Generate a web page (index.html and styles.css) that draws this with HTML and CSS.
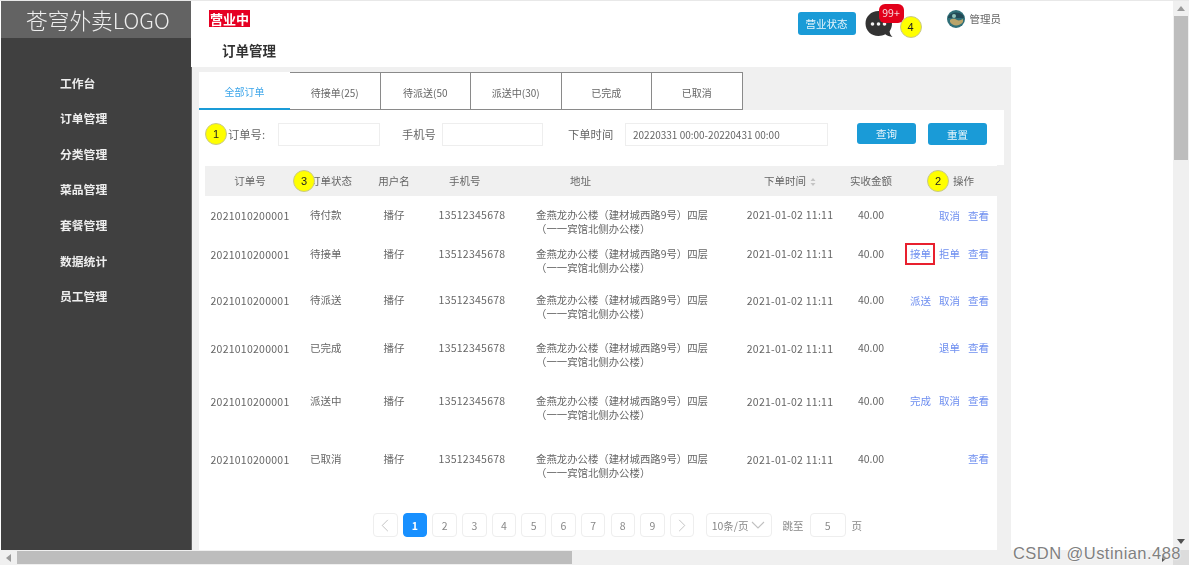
FILE: index.html
```html
<!DOCTYPE html>
<html lang="zh-CN">
<head>
<meta charset="utf-8">
<title>订单管理</title>
<link rel="stylesheet" href="styles.css">
</head>
<body>
<div class="window">
  <div class="page">
    <aside class="sidebar">
      <div class="logo">苍穹外卖LOGO</div>
      <nav class="menu">
        <a>工作台</a><a>订单管理</a><a>分类管理</a><a>菜品管理</a><a>套餐管理</a><a>数据统计</a><a>员工管理</a>
      </nav>
    </aside>
    <main class="main">
      <header class="header">
        <div class="topline">
          <span class="status-tag">营业中</span>
          <div class="top-right">
            <button class="btn btn-status">营业状态</button>
            <div class="notify">
              <svg class="bubble" viewBox="0 0 28 28" width="28" height="28"><path d="M13.5 1C6 1 .5 6.500 .5 13.500S6 26 13.500 26c2.500 0 4.800-.6 6.800-1.700 1.800 1.500 4.200 2.400 7.200 2.700-1.700-1.500-2.700-3.500-2.900-5.800 1.500-2.100 2.400-4.700 2.400-7.700C27 6.500 21 1 13.500 1z" fill="#333"/><circle cx="7.500" cy="14" r="1.800" fill="#f4f4f4"/><circle cx="13.500" cy="14" r="1.800" fill="#f4f4f4"/><circle cx="19.500" cy="14" r="1.800" fill="#f4f4f4"/></svg>
              <span class="count">99+</span>
              <span class="mark mark-4">4</span>
            </div>
            <div class="user">
              <svg class="avatar" viewBox="0 0 18 18" width="18" height="18"><circle cx="9" cy="9" r="9" fill="#2f6f78"/><path d="M1 7c3-5 10-6 15-2l1 3H1z" fill="#234a56"/><path d="M3 10c3-2 5-1 7 0s4 0 6-1v3c-3 4-10 5-13 0z" fill="#b9a46a"/><circle cx="7" cy="6" r="2" fill="#8fc3bb"/></svg>
              <span>管理员</span>
            </div>
          </div>
        </div>
        <h1 class="title">订单管理</h1>
      </header>
      <section class="content">
        <div class="tabs">
          <a class="tab active">全部订单</a><a class="tab">待接单(25)</a><a class="tab">待派送(50</a><a class="tab">派送中(30)</a><a class="tab">已完成</a><a class="tab">已取消</a>
        </div>
        <form class="filter">
          <span class="mark mark-1">1</span>
          <label class="f-order">订单号:</label><span class="input i-order"></span>
          <label class="f-phone">手机号</label><span class="input i-phone"></span>
          <label class="f-time">下单时间</label><span class="input i-time">20220331 00:00-20220431 00:00</span>
          <button type="button" class="btn btn-query">查询</button>
          <button type="button" class="btn btn-reset">重置</button>
        </form>
        <div class="panel">
          <div class="row head">
            <span class="c-center">订单号</span>
            <span class="c-status">订单状态<i class="mark mark-3">3</i></span>
            <span class="c-center">用户名</span>
            <span class="c-phone-head">手机号</span>
            <span class="c-addr-head">地址</span>
            <span class="c-time-head">下单时间<svg class="sort" viewBox="0 0 6 8" width="6" height="8"><path d="M3 0l2.500 3h-5zM3 8L.5 5h5z" fill="#c4c4c4"/></svg></span>
            <span class="c-amount-head">实收金额</span>
            <span class="c-op-head"><i class="mark mark-2">2</i>操作</span>
          </div>
          <div class="rows">
            <div class="row"><span class="c-center num low">2021010200001</span><span class="c-status">待付款</span><span class="c-center">播仔</span><span class="c-center num">13512345678</span><span class="c-addr">金燕龙办公楼（建材城西路9号）四层<br>（一一宾馆北侧办公楼）</span><span class="c-center num">2021-01-02 11:11</span><span class="c-center">40.00</span><span class="c-op low"><a>取消</a><a>查看</a></span></div>
            <div class="row"><span class="c-center num low">2021010200001</span><span class="c-status">待接单</span><span class="c-center">播仔</span><span class="c-center num">13512345678</span><span class="c-addr">金燕龙办公楼（建材城西路9号）四层<br>（一一宾馆北侧办公楼）</span><span class="c-center num">2021-01-02 11:11</span><span class="c-center">40.00</span><span class="c-op"><a class="boxed">接单</a><a>拒单</a><a>查看</a></span></div>
            <div class="row"><span class="c-center num low">2021010200001</span><span class="c-status">待派送</span><span class="c-center">播仔</span><span class="c-center num">13512345678</span><span class="c-addr">金燕龙办公楼（建材城西路9号）四层<br>（一一宾馆北侧办公楼）</span><span class="c-center num low">2021-01-02 11:11</span><span class="c-center">40.00</span><span class="c-op low"><a>派送</a><a>取消</a><a>查看</a></span></div>
            <div class="row"><span class="c-center num low">2021010200001</span><span class="c-status">已完成</span><span class="c-center">播仔</span><span class="c-center num">13512345678</span><span class="c-addr">金燕龙办公楼（建材城西路9号）四层<br>（一一宾馆北侧办公楼）</span><span class="c-center num low">2021-01-02 11:11</span><span class="c-center">40.00</span><span class="c-op"><a>退单</a><a>查看</a></span></div>
            <div class="row"><span class="c-center num low">2021010200001</span><span class="c-status">派送中</span><span class="c-center">播仔</span><span class="c-center num">13512345678</span><span class="c-addr">金燕龙办公楼（建材城西路9号）四层<br>（一一宾馆北侧办公楼）</span><span class="c-center num low">2021-01-02 11:11</span><span class="c-center">40.00</span><span class="c-op"><a>完成</a><a>取消</a><a>查看</a></span></div>
            <div class="row"><span class="c-center num low">2021010200001</span><span class="c-status">已取消</span><span class="c-center">播仔</span><span class="c-center num">13512345678</span><span class="c-addr">金燕龙办公楼（建材城西路9号）四层<br>（一一宾馆北侧办公楼）</span><span class="c-center num low">2021-01-02 11:11</span><span class="c-center">40.00</span><span class="c-op"><a>查看</a></span></div>
          </div>
          <div class="pager">
            <span class="pg"><svg viewBox="0 0 10 16" width="8" height="13"><path d="M8.500 1L1.500 8l7 7" fill="none" stroke="#c0c0c0" stroke-width="1.200"/></svg></span>
            <span class="pg current">1</span><span class="pg">2</span><span class="pg">3</span><span class="pg">4</span><span class="pg">5</span><span class="pg">6</span><span class="pg">7</span><span class="pg">8</span><span class="pg">9</span>
            <span class="pg"><svg viewBox="0 0 10 16" width="8" height="13"><path d="M1.500 1l7 7-7 7" fill="none" stroke="#c0c0c0" stroke-width="1.200"/></svg></span>
            <span class="pg size">10条/页<svg viewBox="0 0 14 8" width="14" height="8"><path d="M1 1l6 6 6-6" fill="none" stroke="#c0c0c0" stroke-width="1.100"/></svg></span>
            <span class="jump">跳至</span>
            <span class="pg jump-input">5</span>
            <span class="jump-end">页</span>
          </div>
        </div>
      </section>
    </main>
  </div>
  <div class="vbar">
    <svg class="up" viewBox="0 0 8 5" width="8" height="5"><path d="M4 0l4 5H0z" fill="#9a9a9a"/></svg>
    <div class="vthumb"></div>
    <svg class="down" viewBox="0 0 8 5" width="8" height="5"><path d="M0 0h8L4 5z" fill="#505050"/></svg>
  </div>
  <div class="hbar">
    <svg viewBox="0 0 5 8" width="5" height="8" class="left"><path d="M5 0v8L0 4z" fill="#9a9a9a"/></svg>
    <div class="hthumb"></div>
    <svg viewBox="0 0 5 8" width="5" height="8" class="right"><path d="M0 0l5 4-5 4z" fill="#505050"/></svg>
  </div>
  <div class="corner"></div>
</div>
<div class="watermark">CSDN @Ustinian.488</div>
</body>
</html>
```
FILE: styles.css
```css
* { box-sizing: border-box; }
html, body { margin: 0; height: 100%; background: #fff; overflow: hidden; }
body {
  position: relative;
  font-family: "Noto Sans CJK SC", "Liberation Sans", sans-serif;
  font-size: 10.5px;
  color: #666;
}
a { color: inherit; text-decoration: none; }
i { font-style: normal; }

.window {
  width: 1189px;
  height: 565px;
  border-top: 1px solid #e8e8e8;
  display: grid;
  grid-template-columns: 1173px 16px;
  grid-template-rows: 549px 15px;
  filter: blur(.3px);
}
.page { display: flex; overflow: hidden; padding-left: 1px; background: #fff; }

.sidebar { width: 190px; flex: none; background: #404040; display: flex; flex-direction: column; }
.logo {
  height: 37px;
  background: #636363;
  color: #efefef;
  font-size: 21.700px;
  line-height: 37px;
  padding-left: 25px;
  white-space: nowrap;
  font-weight: 300;
}
.menu { display: flex; flex-direction: column; padding: 26.600px 0 0 59px; }
.menu a { height: 35.600px; line-height: 35.600px; color: #eee; font-size: 11.800px; font-weight: 700; }

.main { width: 820px; flex: none; display: flex; flex-direction: column; background: #f0f0f0; border-left: 1px solid #666; }
.header { height: 66px; flex: none; background: #fff; padding: 9px 10px 0 18px; margin-left: -1px; }
.topline { display: flex; align-items: flex-start; justify-content: space-between; }
.status-tag { width: 41px; height: 17px; background: #e60023; color: #fff; font-size: 13px; font-weight: 700; line-height: 17px; text-align: center; white-space: nowrap; }
.top-right { display: flex; align-items: flex-start; }
.btn { border: 0; padding: 0; background: #1a9bd7; color: #eaf6fc; border-radius: 3px; font: inherit; }
.btn-status { width: 58px; height: 23px; margin-top: 2px; }
.notify { position: relative; width: 28px; height: 28px; margin-left: 9px; }
.bubble { display: block; }
.count { position: absolute; left: 14px; top: -6px; width: 25px; height: 19px; background: #e2001a; color: #f4d9dc; border-radius: 6px; text-align: center; line-height: 18px; font-size: 10.500px; }
.user { display: flex; align-items: flex-start; margin-left: 54px; gap: 5px; line-height: 18px; }
.avatar { display: block; }
.title { margin: 2px 0 0 13px; font-size: 13.500px; line-height: 20px; font-weight: 700; color: #333; }

.mark { position: absolute; width: 22px; height: 22px; border-radius: 50%; background: #ffff00; border: 1px solid #c9c98a; color: #222; font-size: 11px; line-height: 20px; text-align: center; font-family: "Liberation Sans", sans-serif; }
.mark-4 { left: 35px; top: 6px; }
.mark-1 { left: 6px; top: 13px; }
.mark-3 { left: -2px; top: -4px; }

.content { flex: 1; display: flex; flex-direction: column; padding: 5px 0 0 7px; min-height: 0; }
.tabs { display: flex; height: 38px; flex: none; font-size: 10px; }
.tab { width: 90.500px; height: 38px; line-height: 39px; text-align: center; background: #fff; border: 1px solid #8a8a8a; border-left: 0; }
.tab.active { width: 91px; color: #3ea6ea; border: 0; border-bottom: 2px solid #1a9bd7; }

.filter { position: relative; width: 805px; height: 55px; flex: none; background: #fff; display: flex; align-items: flex-start; padding-top: 13px; }
.filter label { line-height: 23px; white-space: nowrap; font-size: 11.300px; }
.input { height: 23px; border: 1px solid #eee; background: #fff; line-height: 21px; white-space: nowrap; font-size: 10px; }
.f-order { margin-left: 29px; width: 50px; }
.i-order { width: 102px; }
.f-phone { margin-left: 22px; width: 40px; }
.i-phone { width: 101px; }
.f-time { margin-left: 25px; width: 57px; }
.i-time { width: 203px; padding-left: 7px; }
.btn-query { width: 59px; height: 21px; margin-left: 29px; }
.btn-reset { width: 59px; height: 22px; margin-left: 12px; }

.panel { width: 798px; flex: 1; min-height: 0; background: #fff; padding: 1px 0 0 6px; display: flex; flex-direction: column; position: relative; }
.row { display: grid; grid-template-columns: 90px 69px 60px 96px 210px 120px 42px 105px; align-items: start; line-height: 14px; white-space: nowrap; }
.head { height: 30px; flex: none; background: #f0f0f0; align-items: center; }
.head > span { position: relative; }
.rows { display: flex; flex-direction: column; height: 317px; flex: none; }
.rows .row { padding-top: 12px; }
.rows .row:nth-child(1) { height: 39px; }
.rows .row:nth-child(2) { height: 46px; }
.rows .row:nth-child(3) { height: 48px; }
.rows .row:nth-child(4) { height: 53px; }
.rows .row:nth-child(5) { height: 58px; }
.rows .row:nth-child(6) { height: 73px; }
.c-center { text-align: center; }
.num { letter-spacing: .25px; }
.low { margin-top: 1px; }
.c-status { padding-left: 15px; position: relative; }
.c-phone-head { padding-left: 25px; }
.c-addr { padding-left: 16px; font-size: 10.400px; }
.c-addr-head { padding-left: 50px; }
.c-time-head { padding-left: 34px; }
.sort { margin-left: 4px; vertical-align: -1px; }
.c-amount-head { text-align: center; }
.c-op-head { text-align: right; padding-right: 23px; }
.mark-2 { left: 35px; top: -4px; }
.c-op { display: flex; justify-content: flex-end; gap: 8px; padding-right: 8px; color: #6f8ff0; position: relative; }
.boxed { position: relative; }
.boxed::after { content: ""; position: absolute; left: -5px; right: -4px; top: -4px; bottom: -4px; border: 2px solid #e8202e; }

.pager { display: flex; align-items: center; padding: 0 0 0 168px; flex: none; color: #888; }
.pg { width: 24.500px; height: 24px; margin-right: 5.200px; border: 1px solid #eee; border-radius: 4px; display: flex; align-items: center; justify-content: center; background: #fff; flex: none; }
.pg.current { background: #1890ff; border-color: #1890ff; color: #fff; font-weight: 700; }
.size { width: 66px; margin: 0 0 0 6px; gap: 3px; }
.jump { margin-left: 11px; width: 27px; }
.jump-input { width: 36px; margin-right: 6px; }
.jump-end { width: 11px; }

.vbar { background: #f0f0f0; position: relative; display: flex; flex-direction: column; align-items: center; padding-top: 5px; }
.up { flex: none; display: block; }
.vthumb { width: 14px; height: 144px; margin-top: 5px; background: #bdbdbd; }
.down { display: block; margin-top: auto; margin-bottom: 6px; }
.hbar { background: #f0f0f0; display: flex; align-items: center; padding-left: 6px; padding-right: 6px; }
.hthumb { width: 555px; height: 13px; margin-left: 6px; background: #bdbdbd; }
.right { margin-left: auto; }
.corner { background: #dcdcdc; }

.watermark { position: absolute; left: 1013px; top: 543px; font-family: "Liberation Sans", sans-serif; font-size: 16.500px; line-height: 20px; color: #808080; text-shadow: 0 0 2px #fff, 0 0 2px #fff; white-space: nowrap; letter-spacing: .45px; }
```
